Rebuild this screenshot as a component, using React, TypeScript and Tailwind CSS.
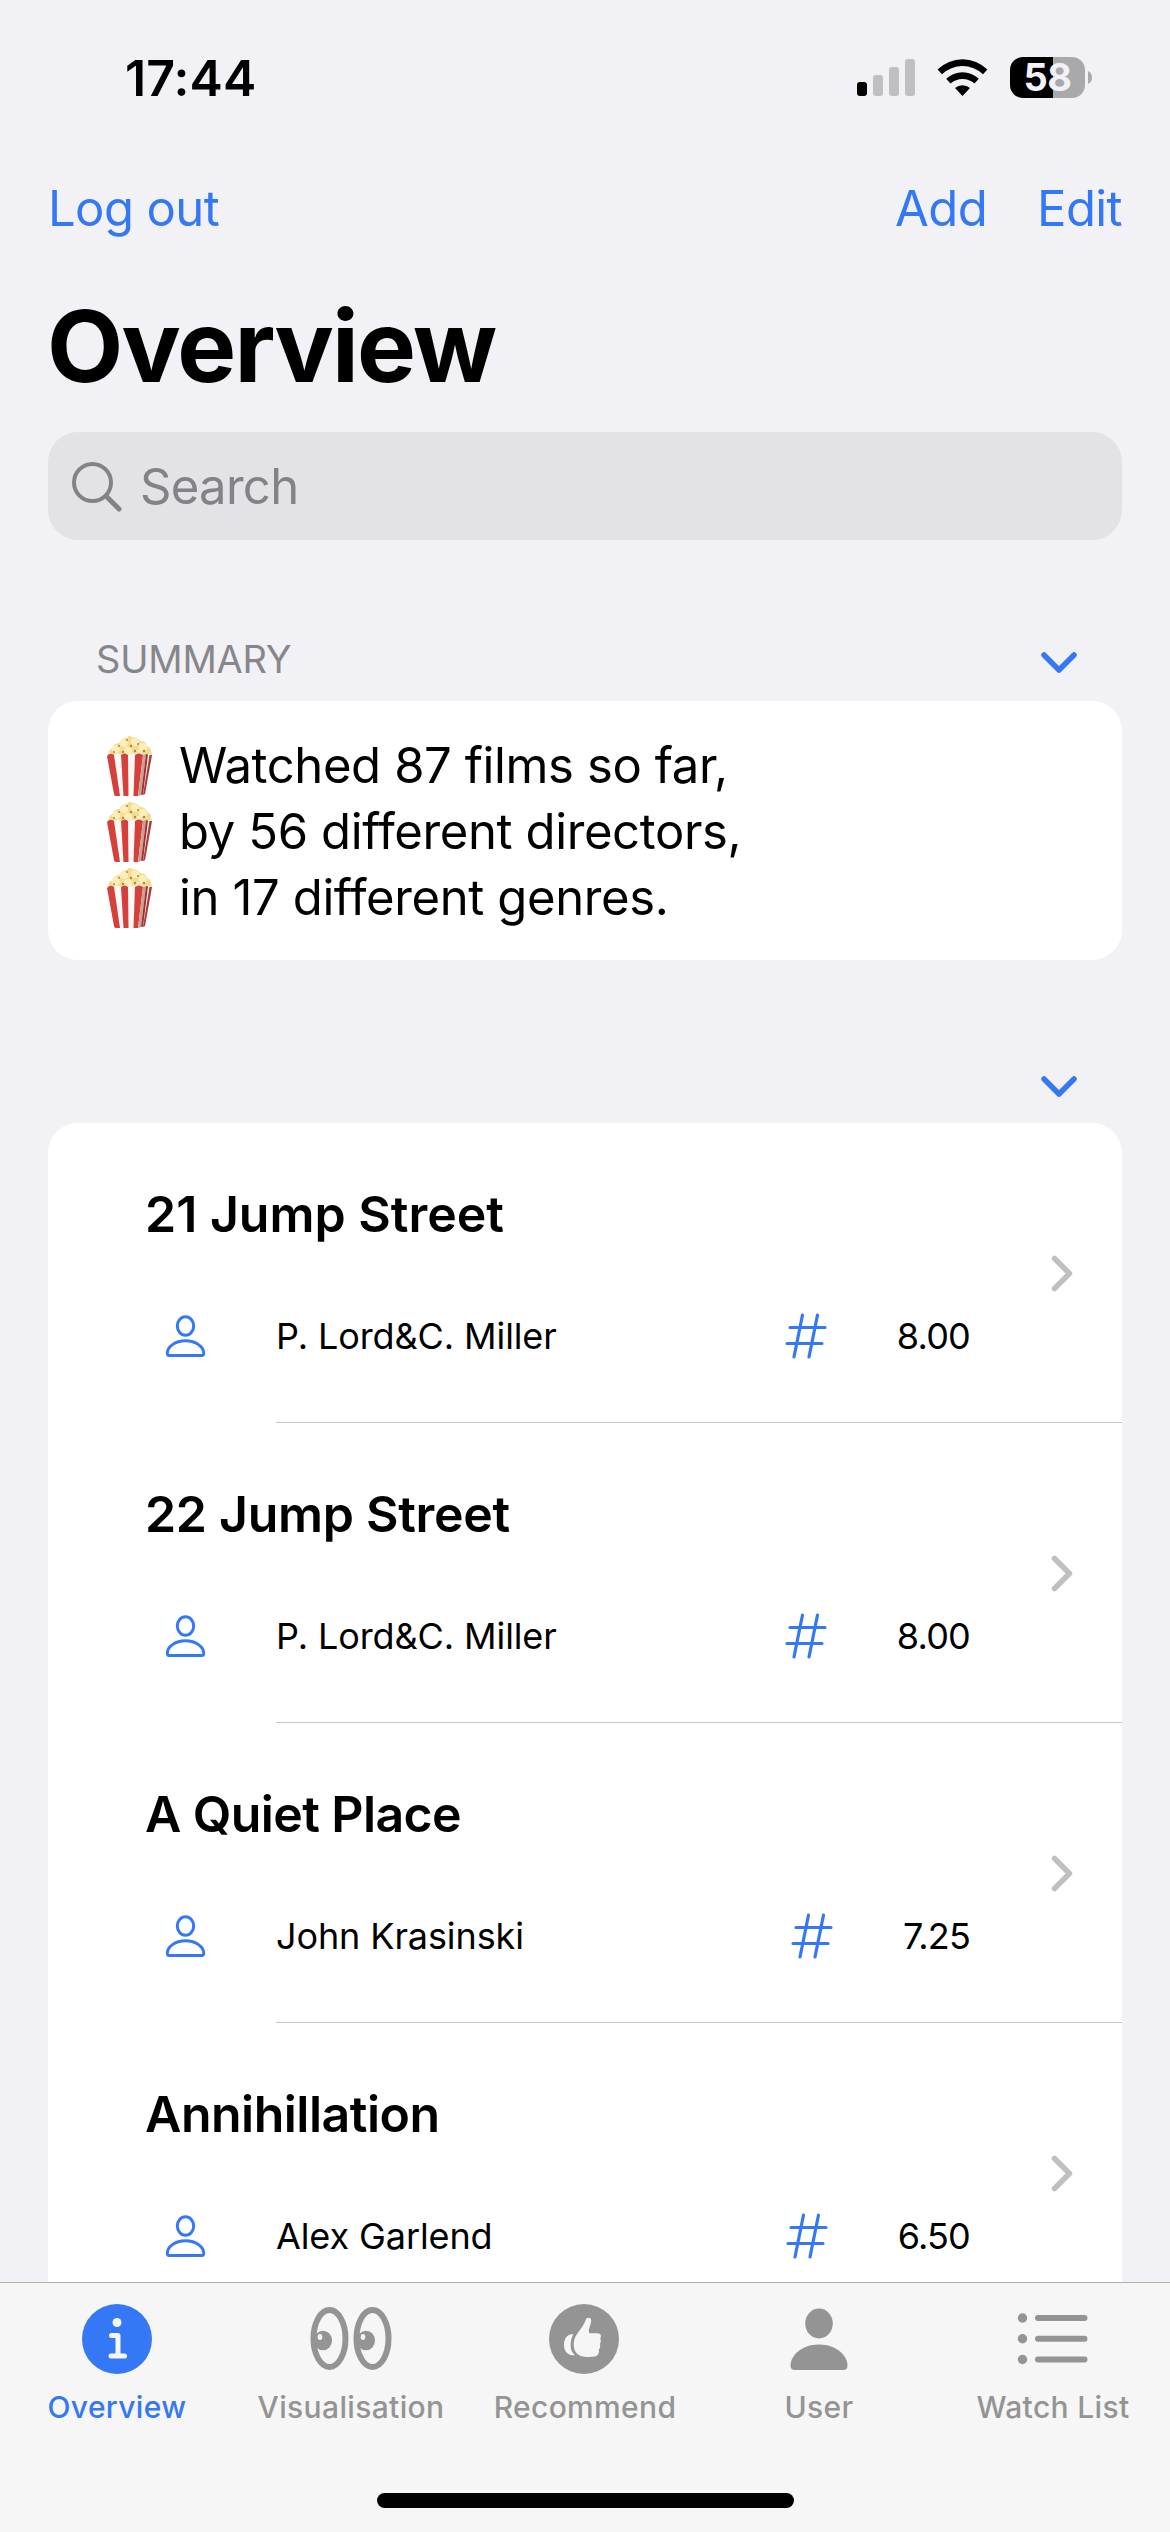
import type { ReactNode } from 'react';

const films = [
  { title: '21 Jump Street', director: 'P. Lord&C. Miller', rating: '8.00', spacing: 'tracking-[0px]' },
  { title: '22 Jump Street', director: 'P. Lord&C. Miller', rating: '8.00', spacing: 'tracking-[-0.3px]' },
  { title: 'A Quiet Place', director: 'John Krasinski', rating: '7.25', spacing: 'tracking-[-0.6px]' },
  { title: 'Annihillation', director: 'Alex Garlend', rating: '6.50', spacing: 'tracking-[-0.5px]' },
];

const summary = [
  'Watched 87 films so far,',
  'by 56 different directors,',
  'in 17 different genres.',
];

function StatusBar() {
  return (
    <div className="flex h-[156px] items-start justify-between pl-[125px] pr-[78px]">
      <span className="mt-[48px] text-[50px] font-semibold leading-[60px] tracking-[0.1px]">17:44</span>
      <div className="mt-[57px] flex">
        <svg width="58" height="41" viewBox="0 0 58 41">
          <rect x="0" y="25" width="10" height="14" rx="3" />
          <g fill="#c0bfc4">
            <rect x="16" y="18" width="10" height="21" rx="3" />
            <rect x="32" y="10" width="10" height="29" rx="3" />
            <rect x="48" y="2" width="10" height="37" rx="3" />
          </g>
        </svg>
        <svg className="ml-[22px]" width="51" height="41" viewBox="0 0 51 41">
          <path d="M.6 12.4a35.6 35.6 0 0 1 49.8 0L46 17.2a30 30 0 0 0-41 0Z" />
          <path d="M9.2 21.8a23.4 23.4 0 0 1 32.6 0L37.5 26.6a18 18 0 0 0-24 0Z" />
          <path d="M18 31a11.5 11.5 0 0 1 15 0L25.5 39Z" />
        </svg>
        <div className="ml-[22px] flex h-[41px] w-[82px] items-center justify-between">
          <div className="h-[41px] w-[75px] rounded-[13px] bg-[linear-gradient(90deg,#000_57.5%,#a9a9ab_57.5%)] text-center text-[38px] font-bold leading-[41px] tracking-[-0.5px] text-[#f2f1f6]">
            58
          </div>
          <svg width="4" height="13" viewBox="0 0 4 13" fill="#a9a9ab">
            <path d="M0 0q4 2 4 6.500T0 13Z" />
          </svg>
        </div>
      </div>
    </div>
  );
}

function Popcorn() {
  return (
    <svg width="48" height="64" viewBox="0 0 48 64">
      <path d="M3 22q-2-6 4-8q1-5 7-5q1-5 7-5q2-4 5-1q6 0 8 4q6 0 7 5q5 2 4 6q3 4-1 5L24 27Z" fill="#f4dd91" />
      <g fill="#fbeebb">
        <circle cx="10" cy="15" r="4" />
        <circle cx="18" cy="9" r="4" />
        <circle cx="29" cy="8" r="4" />
        <circle cx="37" cy="13" r="4" />
        <circle cx="22" cy="17" r="4" />
        <circle cx="33" cy="19" r="3" />
      </g>
      <g fill="#b9803a">
        <circle cx="13" cy="12" r="1" />
        <circle cx="21" cy="6" r="1" />
        <circle cx="25" cy="12" r="1.200" />
        <circle cx="32" cy="10" r="1" />
        <circle cx="17" cy="18" r="1.200" />
        <circle cx="29" cy="17" r="1.200" />
        <circle cx="38" cy="17" r="1.200" />
        <circle cx="8" cy="18" r="1" />
      </g>
      <path d="M1 22q3-4 7-1q3-3 7 0q4-3 8 0q4-3 8 0q4-3 7 0q4-2 8 0l-7 39q-1 2-6 2H12q-4 0-4-2Z" fill="#fbf8f5" />
      <path d="M1 22q3-4 7-1l6 41h-3q-3 0-3-2Z" fill="#d5403c" />
      <path d="M15 21q4-3 7 0l.5 41h-5Z" fill="#d5403c" />
      <path d="M29 21q4-3 8 0l-5 41h-4.500Z" fill="#d5403c" />
      <path d="M37 21l3-1-5 41-3 1Z" fill="#c9a294" />
      <path d="M40 20l2 .5-5 40-2 .5Z" fill="#a3312f" />
      <path d="M43.500 21h2.500l-7 39-2 1Z" fill="#a93c38" />
    </svg>
  );
}

function ChevronDown() {
  return (
    <svg width="38" height="24" viewBox="0 0 38 24" fill="none" stroke="#3478f6" strokeWidth="5.500" strokeLinecap="round" strokeLinejoin="round">
      <path d="M4 4L19 19L34 4" />
    </svg>
  );
}

type Film = (typeof films)[number];

function FilmRow({ title, director, rating, spacing }: Film) {
  return (
    <div className="flex h-[300px] shrink-0 flex-col">
      <div className="flex h-[299px] pr-[47px]">
        <div className="flex flex-1 flex-col pl-[97px]">
          <h3 className={`mt-[61px] text-[50px] font-semibold leading-[60px] ${spacing}`}>{title}</h3>
          <div className="mt-[62px] flex h-[60px] items-center">
            <svg className="ml-[20px]" width="42" height="44" viewBox="0 0 42 44" fill="none" stroke="#3478f6" strokeWidth="3">
              <ellipse cx="20.500" cy="12" rx="8.200" ry="9.200" />
              <path d="M4 41.500q-1.700 0-1.700-2.500C2.300 33 10 26.700 20.500 26.700S38.700 33 38.700 39q0 2.500-1.700 2.500Z" />
            </svg>
            <span className="ml-[69px] flex-1 text-[36px] leading-[60px] tracking-[-0.1px]">{director}</span>
            <svg className="mr-[70px]" width="42" height="46" viewBox="0 0 42 46" fill="none" stroke="#3478f6" strokeWidth="3.200" strokeLinecap="round">
              <path d="M17.500 2L9 44M32.500 2L24 44M5 14.500H40M2 30.500H37" />
            </svg>
            <span className="mr-[79px] text-[36px] leading-[60px] tracking-[-0.8px]">{rating}</span>
          </div>
        </div>
        <svg className="mt-[130px]" width="26" height="42" viewBox="0 0 26 42" fill="none" stroke="#bfbfc1" strokeWidth="5.500" strokeLinecap="round" strokeLinejoin="round">
          <path d="M5.500 5.500L20.500 20.500L5.500 35.500" />
        </svg>
      </div>
      <div className="ml-[228px] h-px bg-[#c6c6c8]" />
    </div>
  );
}

function Tab({ label, active, children }: { label: string; active?: boolean; children: ReactNode }) {
  return (
    <div className={`flex flex-1 flex-col items-center ${active ? 'text-[#3478f6]' : 'text-[#949494]'}`}>
      <svg className="mt-[20px]" width="84" height="72" viewBox="0 0 84 72" fill="currentColor">
        {children}
      </svg>
      <span className="mt-[14px] whitespace-nowrap text-[30px] font-medium leading-[36px] tracking-[0.35px]">{label}</span>
    </div>
  );
}

function TabBar() {
  return (
    <nav className="h-[250px] shrink-0 border-t border-[#b0b0b3] bg-[#f6f6f6]">
      <div className="flex h-[210px]">
        <Tab label="Overview" active>
          <circle cx="42" cy="36" r="35" />
          <circle cx="42" cy="19.500" r="4.500" fill="#f6f6f6" />
          <path d="M36.500 32.500H43V53M36 53H49.500" fill="none" stroke="#f6f6f6" strokeWidth="5" strokeLinecap="round" strokeLinejoin="round" />
        </Tab>
        <Tab label="Visualisation">
          <g fill="none" stroke="currentColor" strokeWidth="6">
            <ellipse cx="20.500" cy="35.500" rx="16" ry="28.500" />
            <ellipse cx="63.500" cy="35.500" rx="16" ry="28.500" />
          </g>
          <ellipse cx="14" cy="37.500" rx="9" ry="9.800" />
          <ellipse cx="57" cy="37.500" rx="9" ry="9.800" />
          <ellipse cx="11" cy="34" rx="2.300" ry="3" fill="#f6f6f6" />
          <ellipse cx="54" cy="34" rx="2.300" ry="3" fill="#f6f6f6" />
        </Tab>
        <Tab label="Recommend">
          <circle cx="41" cy="36" r="35" />
          <g fill="#f6f6f6">
            <path d="M30.300 31.300C24 30.500 21 36 21 42C21 48 24.500 53 32 52.300C28.500 49 27.700 46 27.700 42C27.700 38 28.500 34.500 30.300 31.300Z" />
            <path d="M32.300 34C34.500 29.500 40 24 42.500 17.500C43.500 14.500 46 14 47.800 15.800C48.800 17.500 48 20 46.600 24C45.800 26.500 45.300 30 47 30.200H54.500C58 30.200 58.800 33 57.200 35.500C58.200 37.500 58 39.500 56.800 41C57.600 43 57.300 45 55.800 46.500C56.500 50 55 52.800 52 53.500C48 54.200 42 54.200 39 53.300C34 51.800 31 48 30.800 43C30.600 39.500 31 36.800 32.300 34Z" />
          </g>
        </Tab>
        <Tab label="User">
          <ellipse cx="42" cy="20.500" rx="13.800" ry="15" />
          <path d="M18 67q-4.500 0-4.500-4.500C13.500 53 24 41.500 42 41.500S70.500 53 70.500 62.500Q70.500 67 66 67Z" />
        </Tab>
        <Tab label="Watch List">
          <circle cx="11.500" cy="15" r="4.700" />
          <circle cx="11.500" cy="35.700" r="4.700" />
          <circle cx="11.500" cy="56.500" r="4.700" />
          <path d="M27 15H73.500M27 35.700H73.500M27 56.500H73.500" stroke="currentColor" strokeWidth="6" strokeLinecap="round" />
        </Tab>
      </div>
      <div className="mx-auto h-[15px] w-[417px] rounded-full bg-black" />
    </nav>
  );
}

export default function App() {
  return (
    <div className="flex h-[2532px] w-[1170px] flex-col overflow-hidden bg-[#f2f1f6] font-['Inter',sans-serif] text-black">
      <StatusBar />

      {/* Navigation */}
      <div className="flex h-[104px] items-center px-[48px] pt-px text-[49px] tracking-[-0.6px] text-[#3478f6]">
        <span className="flex-1">Log out</span>
        <span>Add</span>
        <span className="ml-[50px]">Edit</span>
      </div>
      <h1 className="flex h-[172px] items-center pl-[47px] text-[99px] font-bold tracking-[-1.8px]">Overview</h1>

      <div className="mx-[48px] flex h-[108px] items-center rounded-[30px] bg-[#e3e2e7] pl-[23px] pt-px text-[49px] tracking-[-0.7px] text-[#838287]">
        <svg width="52" height="52" viewBox="0 0 52 52" fill="none" stroke="currentColor" strokeWidth="4" strokeLinecap="round">
          <circle cx="21.500" cy="21.500" r="18.500" />
          <path d="M35 35L48 48" strokeWidth="5" />
        </svg>
        <span className="ml-[17px]">Search</span>
      </div>

      {/* Summary */}
      <div className="flex h-[161px] items-end justify-between pb-[18px] pl-[96px] pr-[92px]">
        <span className="text-[38px] leading-[48px] tracking-[-0.2px] text-[#87868b]">SUMMARY</span>
        <span className="mb-[8px]">
          <ChevronDown />
        </span>
      </div>
      <div className="mx-[48px] flex h-[259px] shrink-0 flex-col rounded-[30px] bg-white pl-[58px] pt-[32px]">
        {summary.map((line) => (
          <div key={line} className="flex h-[66px] items-center">
            <Popcorn />
            <span className="ml-[25px] text-[49px] leading-[66px] tracking-[-0.38px]">{line}</span>
          </div>
        ))}
      </div>

      {/* Films */}
      <div className="flex h-[163px] shrink-0 items-end justify-end pb-[24px] pr-[92px]">
        <ChevronDown />
      </div>
      <div className="mx-[48px] flex min-h-0 flex-1 flex-col overflow-hidden rounded-t-[30px] bg-white">
        {films.map((film) => (
          <FilmRow key={film.title} {...film} />
        ))}
      </div>

      <TabBar />
    </div>
  );
}
